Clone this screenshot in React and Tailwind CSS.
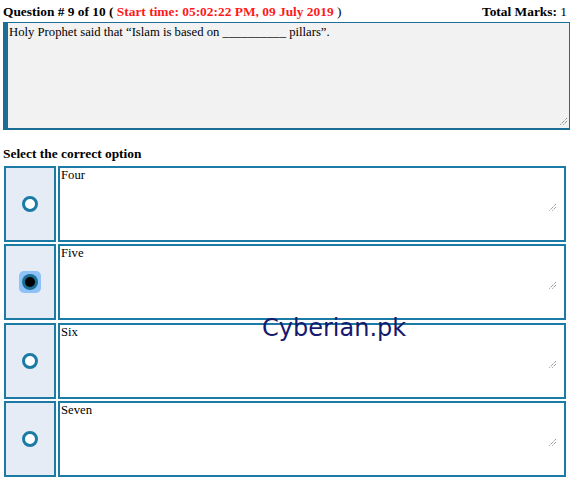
import React from "react";

const B = "border-[#1b7ba5]";

function Radio({ checked }) {
  if (checked) {
    return (
      <div className="w-[22px] h-[22px] rounded-[5px] bg-[#8cc2f7] flex items-center justify-center">
        <div className="w-[16px] h-[16px] rounded-full bg-[#1b6f96] flex items-center justify-center">
          <div className="w-[10px] h-[10px] rounded-full bg-black" />
        </div>
      </div>
    );
  }
  return <div className="w-[16px] h-[16px] rounded-full border-[3px] border-[#1b7ba5] bg-white" />;
}

function Grip({ className }) {
  return (
    <svg width="8" height="8" viewBox="0 0 8 8" className={`absolute ${className}`}>
      <path d="M0.5 7.5 L7.5 0.5 M3.5 7.5 L7.5 3.5" stroke="#666" strokeWidth="1" strokeDasharray="1 1" />
    </svg>
  );
}

function Option({ label, checked }) {
  return (
    <div className="flex gap-[2px] h-[76px]">
      <div className={`w-[52px] border-2 ${B} bg-[#e5ecf6] flex items-center justify-center`}>
        <Radio checked={checked} />
      </div>
      <div className={`relative w-[508px] border-2 ${B} bg-white px-[1px] text-[12.7px] leading-[15px] text-black`}>
        {label}
        <Grip className="right-[7px] bottom-[29px]" />
      </div>
    </div>
  );
}

export default function App() {
  return (
    <div className="relative w-[572px] h-[484px] bg-white text-black" style={{ fontFamily: '"Liberation Serif", "Times New Roman", serif' }}>
      <div className="flex justify-between items-baseline pl-[3px] pr-[5px] pt-[4px] text-[13.4px] leading-[16px]">
        <div>
          <span className="font-bold">Question # 9 of 10 ( </span>
          <span className="font-bold text-[#ff1a1a]">Start time: 05:02:22 PM, 09 July 2019</span>
          <span> )</span>
        </div>
        <div>
          <span className="font-bold">Total Marks:</span> 1
        </div>
      </div>
      <div className="relative ml-[3px] mt-[2px] w-[567px] h-[108px] bg-[#f2f2f2] border border-[#1b6f96] border-l-[5px] border-b-2 pl-[1px] pt-[2px] text-[12.7px] leading-[15px]">
        Holy Prophet said that “Islam is based on __________ pillars”.
        <Grip className="right-[1px] bottom-[3px]" />
      </div>
      <div className="pl-[3px] mt-[16px] text-[13.4px] leading-[16px] font-bold">Select the correct option</div>
      <div className="flex flex-col gap-[2.4px] ml-[4px] mt-[4px]">
        <Option label="Four" />
        <Option label="Five" checked />
        <Option label="Six" />
        <Option label="Seven" />
      </div>
      <div
        className="absolute left-[262px] top-[314px] text-[24px] leading-[28px] text-[#161a6e]"
        style={{ fontFamily: '"DejaVu Sans", Verdana, sans-serif' }}
      >
        Cyberian.pk
      </div>
    </div>
  );
}
